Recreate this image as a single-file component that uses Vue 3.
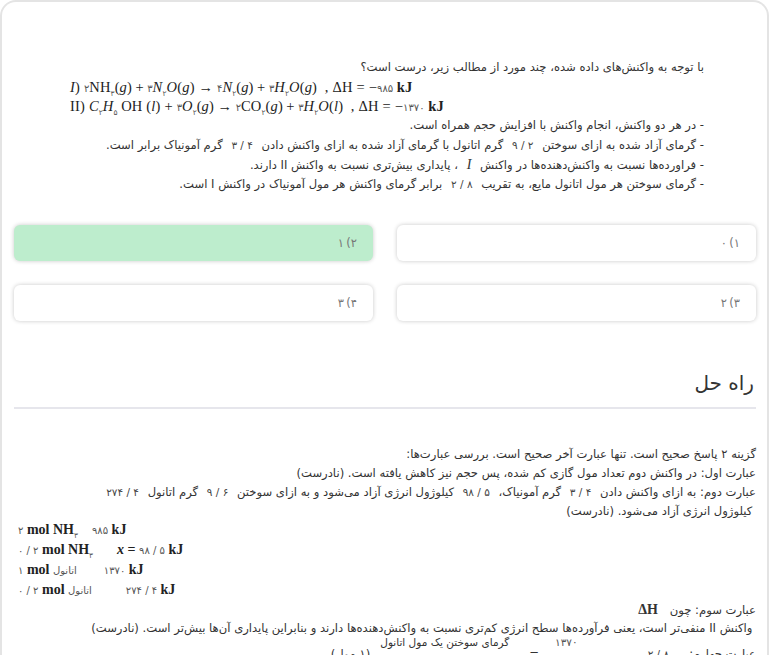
<script setup>
const options = [
  { id: 1, text: "۱)\u2009۰", correct: false },
  { id: 2, text: "۲)\u2009۱", correct: true },
  { id: 3, text: "۳)\u2009۲", correct: false },
  { id: 4, text: "۴)\u2009۳", correct: false },
];
</script>

<template>
  <div class="page">
    <div class="question">
      <p class="line">با توجه به واکنش‌های داده شده، چند مورد از مطالب زیر، درست است؟</p>
      <div class="eq">
        <i>I</i>) <span class="d">۲</span>NH<sub class="d">۳</sub>(<i>g</i>) + <span class="d">۳</span><i>N</i><sub class="d">۲</sub><i>O</i>(<i>g</i>) → <span class="d">۴</span><i>N</i><sub class="d">۲</sub>(<i>g</i>) + <span class="d">۳</span><i>H</i><sub class="d">۲</sub><i>O</i>(<i>g</i>)&nbsp; , ΔH = −<span class="d">۹۸۵</span> <b>kJ</b>
      </div>
      <div class="eq">
        II) <i>C</i><sub class="d">۲</sub><i>H</i><sub class="d">۵</sub> OH (<i>l</i>) + <span class="d">۳</span><i>O</i><sub class="d">۲</sub>(<i>g</i>) → <span class="d">۲</span>CO<sub class="d">۲</sub>(<i>g</i>) + <span class="d">۳</span><i>H</i><sub class="d">۲</sub><i>O</i>(<i>l</i>)&nbsp; , ΔH = −<span class="d">۱۳۷۰</span> <b>kJ</b>
      </div>
      <p class="line">- در هر دو واکنش، انجام واکنش با افزایش حجم همراه است.</p>
      <p class="line">- گرمای آزاد شده به ازای سوختن <span class="num">۹ / ۲</span> گرم اتانول با گرمای آزاد شده به ازای واکنش دادن <span class="num">۳ / ۴</span> گرم آمونیاک برابر است.</p>
      <p class="line">- فراورده‌ها نسبت به واکنش‌دهنده‌ها در واکنش <i class="mi">I</i> ، پایداری بیش‌تری نسبت به واکنش II دارند.</p>
      <p class="line">- گرمای سوختن هر مول اتانول مایع، به تقریب <span class="num">۲ / ۸</span> برابر گرمای واکنش هر مول آمونیاک در واکنش I است.</p>
    </div>

    <div class="options">
      <div v-for="o in options" :key="o.id" class="option" :class="{ correct: o.correct }">{{ o.text }}</div>
    </div>

    <h2 class="title">راه حل</h2>
    <hr class="divider" />

    <div class="solution">
      <p class="line">گزینه ۲ پاسخ صحیح است. تنها عبارت آخر صحیح است. بررسی عبارت‌ها:</p>
      <p class="line">عبارت اول: در واکنش دوم تعداد مول گازی کم شده، پس حجم نیز کاهش یافته است. (نادرست)</p>
      <p class="line">عبارت دوم: به ازای واکنش دادن <span class="num">۳ / ۴</span> گرم آمونیاک، <span class="num">۹۸ / ۵</span> کیلوژول انرژی آزاد می‌شود و به ازای سوختن <span class="num">۹ / ۶</span> گرم اتانول <span class="num">۲۷۴ / ۴</span></p>
      <p class="line">&nbsp;کیلوژول انرژی آزاد می‌شود. (نادرست)</p>
      <div class="calc">
        <div class="calc-row r1"><b><span class="d">۲</span> mol NH<sub class="d">۳</sub></b><b><span class="d">۹۸۵</span> kJ</b></div>
        <div class="calc-row r2"><b><span class="d">۰ / ۲</span> mol NH<sub class="d">۳</sub></b><b><i>x</i> = <span class="d">۹۸ / ۵</span> kJ</b></div>
        <div class="calc-row r3"><b><span class="d">۱</span> mol <small>اتانول</small></b><b><span class="d">۱۳۷۰</span> kJ</b></div>
        <div class="calc-row r4"><b><span class="d">۰ / ۲</span> mol <small>اتانول</small></b><b><span class="d">۲۷۴ / ۴</span> kJ</b></div>
      </div>
      <p class="line">عبارت سوم: چون <b class="delta">ΔH</b></p>
      <p class="line">&nbsp;واکنش II منفی‌تر است، یعنی فرآورده‌ها سطح انرژی کم‌تری نسبت به واکنش‌دهنده‌ها دارند و بنابراین پایداری آن‌ها بیش‌تر است. (نادرست)</p>
      <div class="last">
        <span class="low">عبارت چهارم:</span>
        <span class="low num">۲ / ۸</span>
        <span class="high d">۱۳۷۰</span>
        <span class="low">=</span>
        <span class="high cap">گرمای سوختن یک مول اتانول</span>
        <span class="low">(۱ مول)</span>
      </div>
    </div>
  </div>
</template>

<style scoped>
.page {
  box-sizing: border-box;
  height: 655px;
  overflow: hidden;
  direction: rtl;
  background: #fff;
  border: 2px solid #e4e4e4;
  border-bottom: 0;
  border-radius: 16px 16px 0 0;
  padding: 56px 11px 0 12px;
  font-family: "DejaVu Sans", sans-serif;
  font-size: 11.6px;
  color: #333;
}
.line {
  margin: 0;
  height: 19px;
  line-height: 19px;
  white-space: nowrap;
}
.question {
  padding: 0 52px 0 56px;
}
.question .line {
  height: 19.6px;
  line-height: 19.6px;
}
.eq {
  direction: ltr;
  text-align: left;
  font-family: "Liberation Serif", serif;
  font-size: 14.5px;
  letter-spacing: 0.2px;
  height: 19.2px;
  line-height: 19.2px;
  color: #222;
  white-space: nowrap;
}
.d {
  font-family: "DejaVu Sans", sans-serif;
  font-size: 10px;
  font-weight: 400;
  color: #555;
}
sub.d {
  font-size: 7.5px;
  line-height: 0;
}
.num {
  font-family: "DejaVu Sans", sans-serif;
  font-size: 10.5px;
  margin: 0 5px;
  direction: ltr;
  unicode-bidi: isolate;
  color: #444;
}
.mi {
  font-family: "Liberation Serif", serif;
  font-size: 14px;
  margin: 0 5px;
}
.options {
  display: grid;
  grid-template-columns: 1fr 1fr;
  column-gap: 24px;
  row-gap: 24px;
  margin-top: 31px;
}
.option {
  height: 36px;
  line-height: 36px;
  padding: 0 16px;
  background: #fff;
  border-radius: 6px;
  box-shadow: 0 0 4px rgba(0, 0, 0, 0.22);
  color: #777;
  font-size: 11.5px;
}
.option.correct {
  background: #bdedcd;
}
.title {
  margin: 44px 0 0;
  padding-right: 2px;
  font-size: 20px;
  font-weight: 400;
  line-height: 36px;
  color: #333;
}
.divider {
  margin: 6px 0 0;
  border: 0;
  height: 2px;
  background: #e6e6ec;
}
.solution {
  margin-top: 36px;
}
.calc {
  direction: ltr;
  margin-top: -1px;
  padding-left: 4px;
  font-family: "Liberation Serif", serif;
  font-size: 14px;
  color: #222;
}
.calc-row {
  display: flex;
  height: 20px;
  line-height: 20px;
}
.r1 { gap: 14px; }
.r2 { gap: 24px; }
.r3 { gap: 27px; }
.r4 { gap: 34px; }
.calc small {
  font-family: "DejaVu Sans", sans-serif;
  font-size: 10px;
  font-weight: 400;
  color: #555;
}
.delta {
  font-family: "Liberation Serif", serif;
  font-size: 14px;
  margin: 0 8px;
}
.last {
  display: flex;
  height: 30px;
  margin-top: -3px;
}
.low {
  margin-top: 10px;
  line-height: 19px;
}
.low.num {
  margin: 10px 20px 0 0;
}
.high {
  line-height: 14px;
}
.high.d {
  font-size: 10.5px;
  margin-right: 70px;
}
.last > .low:nth-child(4) {
  margin-right: 16px;
}
.cap {
  font-size: 10.5px;
  margin-right: 20px;
}
.last > .low:last-child {
  margin-right: 10px;
}
</style>

<style>
html,
body {
  margin: 0;
  overflow: hidden;
}
</style>
